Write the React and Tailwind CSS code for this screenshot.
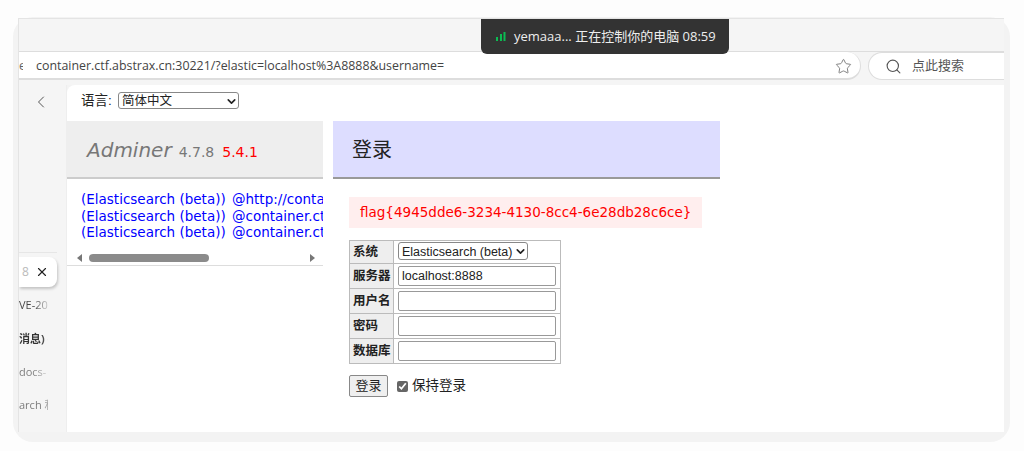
import React from "react";
import { ChevronDown, ChevronLeft, Search, Star, X } from "lucide-react";

const CJK = "font-['DejaVu_Sans','Noto_Sans_CJK_SC',sans-serif]";
const UI = "font-['Open_Sans','Noto_Sans_CJK_SC',sans-serif]";
const FORM = "font-['Liberation_Sans','Noto_Sans_CJK_SC',sans-serif]";

const SIDE_TABS = [
  { text: "VE-20", cls: "from-[#444] from-50% to-[#ccc]" },
  { text: "消息) (", cls: "from-[#333] from-70% to-[#bbb] font-bold" },
  { text: "docs-", cls: "from-[#777] from-50% to-[#ccc]" },
  { text: "arch 和", cls: "from-[#777] from-60% to-[#ddd]" },
];

const LOGIN_ROWS = [
  { label: "服务器", value: "localhost:8888" },
  { label: "用户名", value: "" },
  { label: "密码", value: "" },
  { label: "数据库", value: "" },
];

const SERVERS = ["@http://conta", "@container.ct", "@container.ct"];

const RemotePill = () => (
  <div className={`absolute left-[481px] top-[19px] flex h-[35px] w-[248px] items-center rounded-b-[6px] bg-[#333] pl-[15px] text-[13px] text-[#eee] ${UI}`}>
    <svg width="10" height="10" viewBox="0 0 10 10" className="mr-[8px] fill-[#0cbb52]">
      <rect x="0" y="5" width="2" height="4" />
      <rect x="4" y="2" width="2" height="7" />
      <rect x="7.5" y="0" width="2" height="9" />
    </svg>
    <span className="whitespace-nowrap">yemaaa... 正在控制你的电脑 08:59</span>
  </div>
);

const AddressRow = () => (
  <div className="flex h-[28px] shrink-0 bg-[#f5f5f5]">
    <div className={`flex h-[28px] w-[842px] items-center justify-between rounded-r-[15px] border-r border-b-2 border-[#ddd] bg-white pt-[2px] pr-[8px] text-[12.4px] text-[#444] ${UI}`}>
      <span className="flex overflow-hidden whitespace-nowrap">
        <span className="w-[4px] overflow-hidden text-[#666]">e</span>
        <span className="ml-[13px]">container.ctf.abstrax.cn:30221/?elastic=localhost%3A8888&amp;username=</span>
      </span>
      <Star size={17} strokeWidth={1.3} className="text-[#777]" />
    </div>
    <div className={`ml-[7px] flex h-[28px] flex-1 items-center rounded-l-[15px] border-y border-l border-[#ddd] bg-white pl-[16px] text-[13px] text-[#555] ${UI}`}>
      <Search size={17} strokeWidth={1.6} className="mr-[10px] text-[#555]" />
      点此搜索
    </div>
  </div>
);

const Sidebar = () => (
  <div className={`relative w-[48px] shrink-0 border-r border-[#eee] bg-[#f5f5f5] ${UI}`}>
    <div className="flex h-[32px] items-center pl-[12px] pt-[1px]">
      <ChevronLeft size={20} strokeWidth={1.2} className="text-[#555]" />
    </div>
    <div className="mt-[135px] h-px w-[38px] bg-[#e6e6e6]" />
    <div className="mt-[4px] flex h-[30px] w-[38px] items-center justify-between rounded-r-[8px] bg-white pl-[3px] pr-[8px] shadow-[1px_2px_3px_rgba(0,0,0,0.2)]">
      <span className="w-[7px] overflow-hidden text-[12px] text-[#bbb]">88</span>
      <X size={14} strokeWidth={2} className="text-[#222]" />
    </div>
    <div className="mt-[2px] flex flex-col">
      {SIDE_TABS.map((tab) => (
        <div key={tab.text} className="flex h-[33.3px] w-[29px] items-center overflow-hidden whitespace-nowrap text-[11px]">
          <span className={`bg-gradient-to-r bg-clip-text text-transparent ${tab.cls}`}>{tab.text}</span>
        </div>
      ))}
    </div>
  </div>
);

const LeftMenu = () => (
  <div className={`w-[256px] shrink-0 ${CJK}`}>
    <div className="flex h-[58px] items-center border-b-2 border-[#ccc] bg-[#eee] pl-[20px] pt-[2px] whitespace-nowrap">
      <span className="text-[20px] text-[#777] italic">Adminer</span>
      <span className="ml-[7px] mt-[5px] text-[14px] text-[#777]">4.7.8</span>
      <span className="ml-[8px] mt-[5px] text-[14px] text-[#f00]">5.4.1</span>
    </div>
    <div className="overflow-hidden pt-[12px] pl-[14px] text-[13.5px] leading-[16.5px] whitespace-nowrap text-[#00f]">
      {SERVERS.map((server, i) => (
        <div key={i}>
          (Elasticsearch (beta)) <span className="ml-[2px]">{server}</span>
        </div>
      ))}
    </div>
    <div className="mt-[10px] flex h-[15px] items-center border-b border-[#ddd] pl-[10px]">
      <span className="h-0 w-0 border-y-[4px] border-r-[5px] border-y-transparent border-r-[#777]" />
      <span className="ml-[7px] h-[8px] w-[120px] rounded-full bg-[#8b8b8b]" />
      <span className="ml-[101px] h-0 w-0 border-y-[4px] border-l-[5px] border-y-transparent border-l-[#777]" />
    </div>
  </div>
);

// native arrow takes too much room here, so the chevron sits over the select
const PlainSelect = ({ label, className }) => (
  <span className={`relative inline-block ${className}`}>
    <select className="block size-full appearance-none rounded-[3px] border border-[#888] bg-white pl-[3px] text-[12.5px] text-[#222]">
      <option>{label}</option>
    </select>
    <ChevronDown size={13} strokeWidth={3} className="pointer-events-none absolute right-[1px] top-[3px] text-[#222]" />
  </span>
);

const LoginTable = () => (
  <table className={`mt-[12px] border-collapse border border-[#bbb] text-[12.5px] ${FORM}`}>
    <tbody>
      <tr className="h-[23px]">
        <th className="w-[44px] border border-[#bbb] bg-[#eee] pl-[3px] text-left font-bold text-[#222]">系统</th>
        <td className="w-[167px] border border-[#bbb] pl-[4px]">
          <PlainSelect label="Elasticsearch (beta)" className="block h-[18px] w-[130px]" />
        </td>
      </tr>
      {LOGIN_ROWS.map((row) => (
        <tr key={row.label} className="h-[25px]">
          <th className="border border-[#bbb] bg-[#eee] pl-[3px] text-left font-bold whitespace-nowrap text-[#222]">{row.label}</th>
          <td className="border border-[#bbb] pl-[4px]">
            <input
              defaultValue={row.value}
              className="block h-[20px] w-[158px] rounded-[2px] border border-[#999] bg-white px-[3px] text-[12.5px] text-[#222]"
            />
          </td>
        </tr>
      ))}
    </tbody>
  </table>
);

const LoginPanel = () => (
  <div className="ml-[10px] w-[387px]">
    <h1 className={`flex h-[58px] items-center border-b-2 border-[#999] bg-[#ddf] pl-[19px] pt-[1px] text-[20px] font-normal text-[#222] ${CJK}`}>登录</h1>
    <div className="pl-[16px]">
      <div className={`mt-[18px] flex h-[31px] w-[353px] items-center bg-[#fee] pl-[11px] text-[13.5px] whitespace-nowrap text-[#f00] ${CJK}`}>
        flag{"{"}4945dde6-3234-4130-8cc4-6e28db28c6ce{"}"}
      </div>
      <LoginTable />
      <div className={`mt-[11px] flex items-center text-[13.5px] text-[#222] ${FORM}`}>
        <button className="h-[22px] w-[39px] rounded-[2px] border border-[#888] bg-[#efefef] text-[13px] text-[#222]">登录</button>
        <input type="checkbox" defaultChecked className="ml-[9px] size-[11px] accent-[#666]" />
        <span className="ml-[4px]">保持登录</span>
      </div>
    </div>
  </div>
);

export default function App() {
  return (
    <div className="relative h-[451px] w-[1024px] overflow-hidden bg-[#fdfdfd] pt-[17px] pl-[13px]">
      <div className="h-[425px] w-[997px] rounded-[20px] bg-[#f3f3f3] pt-[1px] pl-[5px]">
        <div className="flex h-[414px] w-[986px] flex-col overflow-hidden border-t border-l border-[#e4e4e4]">
          <div className="h-[33px] shrink-0 border-b border-[#ddd] bg-[#f5f5f5]" />
          <AddressRow />
          <div className="h-[5px] shrink-0 bg-[#f5f5f5]" />
          <div className="flex min-h-0 flex-1">
            <Sidebar />
            <div className="flex-1 rounded-tl-[8px] bg-white">
              <div className={`flex h-[36px] items-start pl-[14px] pt-[7px] text-[13.5px] leading-[17px] text-[#222] ${FORM}`}>
                <span className="w-[37px] whitespace-nowrap">语言:</span>
                <PlainSelect label="简体中文" className="h-[17px] w-[121px]" />
              </div>
              <div className="flex">
                <LeftMenu />
                <LoginPanel />
              </div>
            </div>
          </div>
        </div>
      </div>
      <RemotePill />
    </div>
  );
}
